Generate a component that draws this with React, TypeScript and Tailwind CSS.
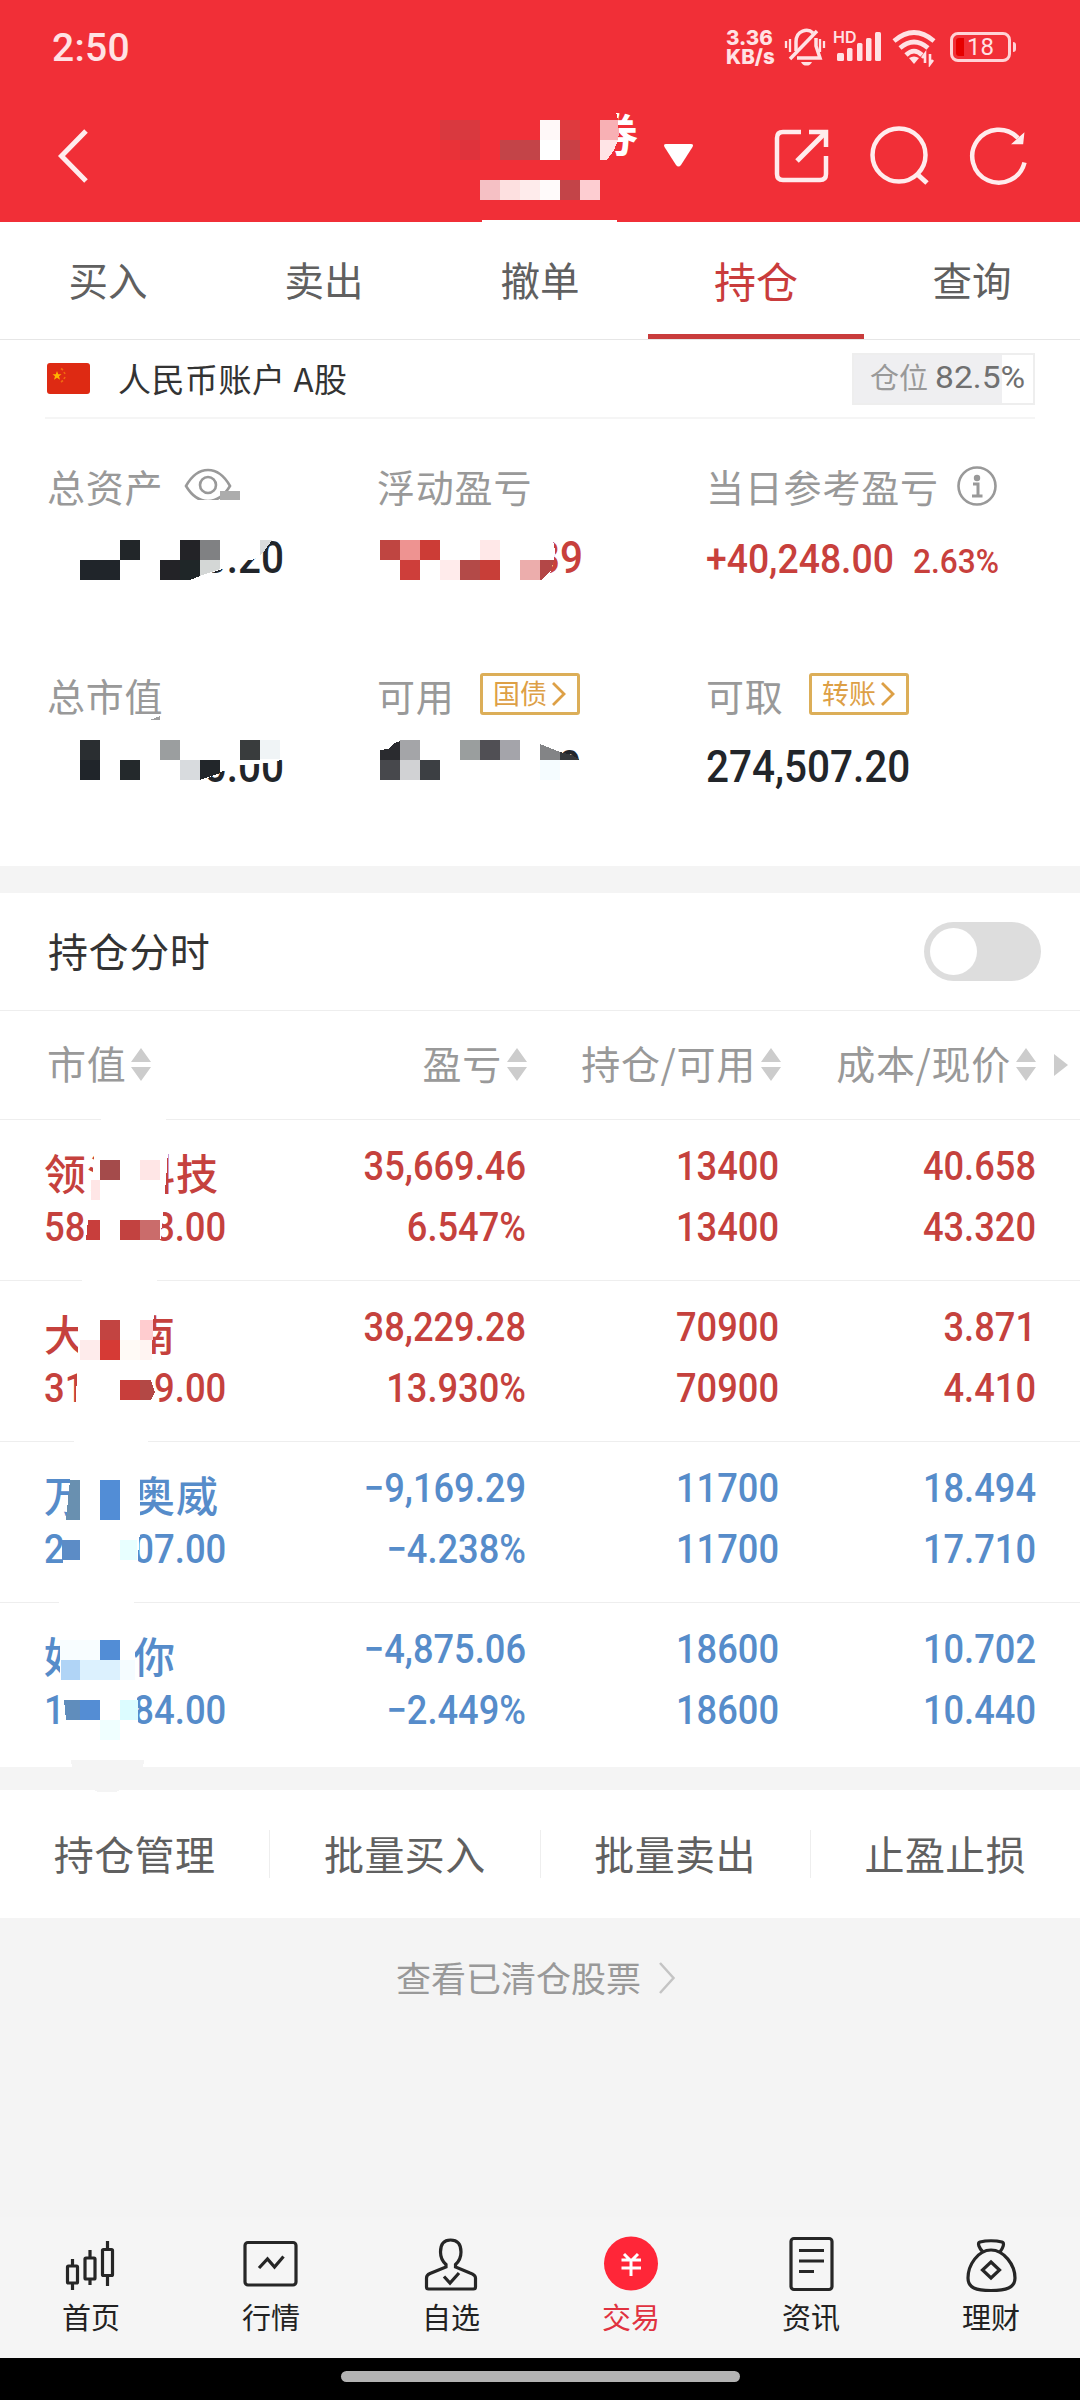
import React from "react";
import clsx from "clsx";

interface Holding {
  name: [string, string];
  nameWidth: string;
  value: [string, string];
  profit: string;
  rate: string;
  total: string;
  usable: string;
  cost: string;
  price: string;
  up: boolean;
}

const holdings: Holding[] = [
  {
    name: ["领氵", "科技"],
    nameWidth: "w-[175px]",
    value: ["58", "8.00"],
    profit: "35,669.46",
    rate: "6.547%",
    total: "13400",
    usable: "13400",
    cost: "40.658",
    price: "43.320",
    up: true,
  },
  {
    name: ["大", "南"],
    nameWidth: "w-[132px]",
    value: ["31", "69.00"],
    profit: "38,229.28",
    rate: "13.930%",
    total: "70900",
    usable: "70900",
    cost: "3.871",
    price: "4.410",
    up: true,
  },
  {
    name: ["万", "奥威"],
    nameWidth: "w-[175px]",
    value: ["2", "07.00"],
    profit: "−9,169.29",
    rate: "−4.238%",
    total: "11700",
    usable: "11700",
    cost: "18.494",
    price: "17.710",
    up: false,
  },
  {
    name: ["好", "你"],
    nameWidth: "w-[132px]",
    value: ["1", "84.00"],
    profit: "−4,875.06",
    rate: "−2.449%",
    total: "18600",
    usable: "18600",
    cost: "10.702",
    price: "10.440",
    up: false,
  },
];

const tabs = ["买入", "卖出", "撤单", "持仓", "查询"];
const actions = ["持仓管理", "批量买入", "批量卖出", "止盈止损"];

// x, y, width, height, color
type Cell = [number, number, number, number, string];

const privacyCells: Cell[] = [
  [440, 120, 40, 20, "#d9393f"],
  [440, 140, 20, 20, "#e93238"],
  [460, 140, 20, 20, "#df333c"],
  [500, 140, 40, 20, "#c34448"],
  [540, 120, 20, 20, "#fff8f8"],
  [540, 140, 20, 20, "#ffffff"],
  [560, 120, 20, 20, "#df3a3e"],
  [560, 140, 20, 20, "#c94045"],
  [480, 180, 20, 20, "#f5c0c4"],
  [500, 180, 20, 20, "#fde0e0"],
  [520, 180, 20, 20, "#feebeb"],
  [540, 180, 20, 20, "#fffafa"],
  [560, 180, 20, 20, "#c34448"],
  [580, 180, 20, 20, "#fdcdd1"],
  [482, 220, 135, 2, "#ffffff"],

  [220, 491, 20, 9, "#acacac"],
  [120, 540, 20, 20, "#222629"],
  [180, 540, 20, 20, "#232327"],
  [200, 540, 20, 20, "#808183"],
  [80, 560, 40, 20, "#20252a"],
  [160, 560, 20, 20, "#232327"],

  [380, 540, 20, 20, "#bf4541"],
  [400, 540, 20, 20, "#ee9391"],
  [420, 540, 20, 20, "#cc3c36"],
  [480, 540, 20, 20, "#ffe8e8"],
  [400, 560, 20, 20, "#ce3e3a"],
  [440, 560, 20, 20, "#ffebeb"],
  [460, 560, 20, 20, "#b34a48"],
  [480, 560, 20, 20, "#c83e38"],
  [520, 560, 20, 20, "#ecadac"],

  [80, 740, 20, 20, "#2a2e31"],
  [160, 740, 20, 20, "#9b9e9f"],
  [240, 740, 20, 20, "#393c3d"],
  [260, 740, 20, 19, "#f0f4f6"],
  [80, 760, 20, 20, "#20252a"],
  [120, 760, 20, 20, "#24292c"],
  [180, 760, 20, 20, "#d8dbde"],

  [400, 740, 20, 20, "#a4a5a8"],
  [460, 740, 20, 20, "#9a9e9e"],
  [480, 740, 20, 20, "#504f54"],
  [500, 740, 20, 20, "#a4a4aa"],
  [380, 760, 20, 20, "#47484c"],
  [400, 760, 20, 20, "#d1d2d4"],
  [420, 760, 20, 20, "#3c3f43"],
  [540, 760, 20, 20, "#f5fcff"],

  [100, 1160, 20, 20, "#a44b4b"],
  [140, 1160, 20, 20, "#ffe6e6"],
  [91, 1180, 9, 20, "#ffe6e6"],
  [120, 1220, 20, 20, "#c24240"],
  [140, 1220, 20, 20, "#ca6c6b"],

  [100, 1320, 20, 20, "#c24441"],
  [140, 1320, 13, 20, "#ffcccf"],
  [80, 1340, 20, 20, "#feebeb"],
  [100, 1340, 20, 20, "#d63a35"],
  [120, 1340, 20, 20, "#fffaf6"],
  [140, 1340, 12, 20, "#fff4f2"],
  [120, 1380, 20, 20, "#c83e3b"],

  [100, 1480, 20, 40, "#528dd6"],
  [120, 1540, 17, 20, "#e8ffff"],

  [60, 1640, 40, 20, "#f8fdff"],
  [100, 1640, 20, 20, "#528dd6"],
  [61, 1660, 19, 20, "#b0d4f6"],
  [80, 1660, 40, 20, "#dcf1fe"],
  [120, 1660, 15, 20, "#f5fcff"],
  [80, 1700, 20, 20, "#548dd4"],
  [120, 1700, 18, 20, "#dcfcff"],
  [100, 1720, 20, 20, "#f0ffff"],
];

// Smudge mask drawn above the sensitive values
function PrivacyMask() {
  return (
    <svg
      className="pointer-events-none absolute inset-0"
      width="1080"
      height="2400"
      viewBox="0 0 1080 2400"
      shapeRendering="crispEdges"
    >
      <path d="M585 105H614L618 120L619 132L616 145L607 160L600 165H585Z" fill="#f12f37" />
      <path d="M180 500H222V510H180Z" fill="#fff" />
      <path d="M40 535H268L272 540L260 556L252 560L240 561L225 568L190 580H40Z" fill="#fff" />
      <path d="M370 535H552L555 550L554 560L550 574L541 582H370Z" fill="#fff" />
      <path d="M40 735H285V759L268 763L240 765L226 770L218 773L200 782H40Z" fill="#fff" />
      <path d="M370 735H558V760H590V790H370Z" fill="#fff" />
      <path d="M102 1117H166V1122H170L166 1180L160 1244H84L91 1190L95 1150Z" fill="#fff" />
      <path d="M82 1280H157V1283L154 1310L151 1362L154 1386L150 1402H76L79 1310Z" fill="#fff" />
      <path d="M74 1440H148V1443L140 1480V1530L137 1570H62L70 1480Z" fill="#fff" />
      <path d="M59 1600H134V1606V1640L136 1680L138 1724H62L60 1670Z" fill="#fff" />
      <path d="M71 1760H144L143 1768H72Z" fill="#f4f4f4" />
      <path d="M92 1789H122L116 1792H98Z" fill="#f4f4f4" />
      {privacyCells.map(([x, y, w, h, fill], i) => (
        <rect key={i} x={x} y={y} width={w} height={h} fill={fill} />
      ))}
      <path d="M600 120H617.5L619 132L618 140H600Z" fill="#f8b0b4" />
      <path d="M600 140H618L614 150L607 160H600Z" fill="#ffe4e6" />
      <path d="M260 540H272L265 550L260 556Z" fill="#dadcdd" />
      <path d="M180 560H200V576L190 580H180Z" fill="#1f2628" />
      <path d="M200 560H220V569L200 576Z" fill="#d4d7d6" />
      <path d="M540 560H554L551 571L541 580H540Z" fill="#b34747" />
      <path d="M150 720L160 716V720Z" fill="#a0a0a0" />
      <path d="M200 760H220V773L200 780Z" fill="#22262a" />
      <path d="M380 760V750L388 749L394 743L400 741V760Z" fill="#2a2b2f" />
      <path d="M540 744L560 752V760H540Z" fill="#838486" />
      <path d="M560 752L572 755L580 760H560Z" fill="#36383b" />
      <path d="M88 1220H100V1240H86Z" fill="#c83e3c" />
      <path d="M140 1380H151L155 1392L151 1400H140Z" fill="#b34845" />
      <path d="M70 1480H80V1520H66Z" fill="#6990b0" />
      <path d="M62 1540H80V1560H62Z" fill="#5c8cc6" />
      <path d="M64 1700H80V1720H66Z" fill="#608dbc" />
    </svg>
  );
}

function StatusBar() {
  return (
    <div className="flex h-[93px] items-center justify-between pl-[52px] pr-[64px] text-[#ffe2e4]">
      <span className="pt-[3px] font-[Roboto] text-[39px] font-medium leading-none tracking-[0.3px]">2:50</span>
      <div className="flex items-center">
        <div className="w-[56px] font-[Inter] text-[20.5px] font-extrabold leading-[19px]">
          3.36
          <br />
          KB/s
        </div>
        <svg width="46" height="40" viewBox="0 0 46 40" fill="none" stroke="currentColor" strokeWidth="3.500">
          <path d="M8 32L35 4" />
          <path d="M14 24V15C14 3 26 1 31 6M34 11V19L38 31H15" />
          <path d="M19 35A6 6 0 0 0 30 35Z" fill="currentColor" stroke="none" />
          <path d="M4 14V21M8 12V25M38 12V25M42 14V21" strokeWidth="2.300" />
        </svg>
        <svg className="ml-[3px]" width="54" height="40" viewBox="0 0 54 40" fill="currentColor">
          <text x="2" y="16" fontFamily="Inter" fontSize="16" fontWeight="600">
            HD
          </text>
          <rect x="6" y="26" width="7" height="8" rx="1.5" />
          <rect x="16" y="21" width="5.500" height="13" rx="1.500" />
          <rect x="26" y="16" width="5.500" height="18" rx="1.500" />
          <rect x="35" y="11" width="5.500" height="23" rx="1.500" />
          <rect x="44" y="5" width="6" height="29" rx="1.500" />
        </svg>
        <svg className="ml-1.5" width="46" height="40" viewBox="0 0 46 40" fill="none" stroke="currentColor" strokeWidth="4.600">
          <path d="M3 14Q23 -3 43 14" />
          <path d="M9 21Q23 9 37 21" />
          <path d="M15 28Q23 20 31 28" />
          <path d="M18 31Q23 28 28 31L23 37Z" fill="currentColor" stroke="none" />
          <path d="M34 36V27L31 31M39 27V37L42 33" strokeWidth="2.600" />
        </svg>
        <div className="ml-[13px] flex items-center gap-0.5">
          <div className="flex h-[30px] w-[61px] items-center rounded-[8px] border-[3px] border-[#ffd3d6] pl-[3px]">
            <div className="h-[18px] w-2 rounded-l-[3px] bg-[#e60000]" />
            <span className="ml-[3px] font-[Roboto] text-[24px] leading-none">18</span>
          </div>
          <div className="h-2.5 w-[3px] rounded-r bg-[#ffd3d6]" />
        </div>
      </div>
    </div>
  );
}

function TitleBar() {
  return (
    <div className="flex h-[129px] items-start text-white">
      <svg className="ml-[56px] mt-[34px]" width="34" height="58" viewBox="0 0 34 58" fill="none" stroke="#ffeced" strokeWidth="5">
        <path d="M30 4L5.500 29L30 54" />
      </svg>
      <div className="ml-[503px] mt-[16px] w-[46px] text-[45px] font-bold leading-[48px]">券</div>
      <svg className="ml-[24px] mt-[50px]" width="31" height="26" viewBox="0 0 31 26" fill="#fff">
        <path d="M3 1H28Q31 1 29.500 4L18 22Q15.500 25 13 22L1.500 4Q0 1 3 1Z" />
      </svg>
      <svg className="ml-[78px] mt-[34px]" width="58" height="58" viewBox="0 0 58 58" fill="none" stroke="#ffeced" strokeWidth="4.500">
        <path d="M29 5H11Q5 5 5 11V47Q5 53 11 53H48Q54 53 54 47V29M37 5H54V20" />
        <path d="M54 5L25 34" strokeWidth="5" />
      </svg>
      <svg className="ml-[38px] mt-[31px]" width="64" height="64" viewBox="0 0 64 64" fill="none" stroke="#ffeced" strokeWidth="4.500">
        <circle cx="31" cy="31" r="26.500" />
        <path d="M49 50L59 59" strokeWidth="5" />
      </svg>
      <svg className="ml-[37px] mt-[32px]" width="62" height="62" viewBox="0 0 62 62" fill="none" stroke="#ffeced" strokeWidth="4.500">
        <path d="M55.500 37.500A26.500 26.500 0 1 1 49 13" />
        <path d="M54.500 9L53.500 18.500H44Z" fill="#ffeced" strokeWidth="1.500" />
      </svg>
    </div>
  );
}

function LinkBadge({ label }: { label: string }) {
  return (
    <div className="ml-[25px] flex h-[42px] w-[100px] items-center justify-center gap-1 rounded-[3px] border-3 border-[#dcae58] pb-[2px] text-[27px] font-normal tracking-normal text-[#dda046]">
      {label}
      <svg className="mt-[2px]" width="15" height="24" viewBox="0 0 15 24" fill="none" stroke="currentColor" strokeWidth="2.800">
        <path d="M2 1L13 12L2 23" />
      </svg>
    </div>
  );
}

function SummaryItem({ label, extra, children }: { label: string; extra?: React.ReactNode; children: React.ReactNode }) {
  return (
    <div>
      <div className="flex h-[46px] items-center text-[38px] tracking-[0.8px] text-[#999]">
        {label}
        {extra}
      </div>
      <div className="mt-[24px] flex h-[52px] items-center font-[Roboto] font-medium">{children}</div>
    </div>
  );
}

const bigNumber = "text-[44px] leading-none text-[#22252a]";

function Summary() {
  return (
    <div className="grid h-[447px] grid-cols-[330px_329px_1fr] grid-rows-[209px_1fr] pl-[47px] pt-[43px]">
      <SummaryItem
        label="总资产"
        extra={
          <svg className="ml-[20px] mt-[2px]" width="50" height="38" viewBox="0 0 50 38" fill="none" stroke="#999" strokeWidth="2.600">
            <path d="M3 19Q12 3 25 3Q38 3 47 19Q38 34 25 34Q12 34 3 19Z" />
            <circle cx="25" cy="18" r="8" />
          </svg>
        }
      >
        <div className={clsx(bigNumber, "w-[237px] origin-right scale-x-[.92] text-right")}>0.20</div>
      </SummaryItem>
      <SummaryItem label="浮动盈亏">
        <div className="w-[206px] origin-right scale-x-[.92] text-right text-[44px] leading-none text-[#c8403c]">39</div>
      </SummaryItem>
      <SummaryItem
        label="当日参考盈亏"
        extra={
          <svg className="ml-[17px] mt-[2px]" width="42" height="42" viewBox="0 0 42 42" fill="none" stroke="#999" strokeWidth="2.600">
            <circle cx="21" cy="21" r="18.500" />
            <circle cx="21" cy="13" r="3.200" fill="#999" stroke="none" />
            <path d="M17 19H22V31M16 31H26.500" strokeWidth="3" />
          </svg>
        }
      >
        <div className="flex items-baseline pt-[2px] text-[#c8403c]">
          <span className="w-[190px] origin-left scale-x-[.91] whitespace-nowrap text-[41px] leading-none">+40,248.00</span>
          <span className="ml-[17px] origin-left scale-x-[.93] text-[34px] leading-none">2.63%</span>
        </div>
      </SummaryItem>
      <SummaryItem label="总市值">
        <div className={clsx(bigNumber, "w-[237px] origin-right scale-x-[.92] text-right")}>0.00</div>
      </SummaryItem>
      <SummaryItem label="可用" extra={<LinkBadge label="国债" />}>
        <div className={clsx(bigNumber, "w-[204px] origin-right scale-x-[.92] text-right")}>0</div>
      </SummaryItem>
      <SummaryItem label="可取" extra={<LinkBadge label="转账" />}>
        <div className={clsx(bigNumber, "origin-left scale-x-[.92]")}>274,507.20</div>
      </SummaryItem>
    </div>
  );
}

function SortHead({ label, className }: { label: string; className: string }) {
  return (
    <div className={clsx("flex items-center gap-[5px] whitespace-nowrap", className)}>
      <span className="pb-[5px]">{label}</span>
      <svg width="20" height="34" viewBox="0 0 20 34" fill="#ccc">
        <path d="M10 0L20 14H0ZM0 19H20L10 33Z" />
      </svg>
    </div>
  );
}

function NumberPair({ top, bottom, className }: { top: string; bottom: string; className: string }) {
  return (
    <div className={clsx("origin-right scale-x-[.895] text-right font-[Roboto] text-[40.5px] font-medium leading-[61px]", className)}>
      <div>{top}</div>
      <div>{bottom}</div>
    </div>
  );
}

function HoldingRow({ item }: { item: Holding }) {
  return (
    <div
      className={clsx(
        "flex h-[161px] border-t border-[#eee] pl-[44px] pt-[16px]",
        item.up ? "text-[#c5413d]" : "text-[#568cca]",
      )}
    >
      <div className="w-[182px]">
        <div
          className={clsx(
            "flex h-[61px] items-center justify-between pt-[9px] text-[42px] font-medium tracking-[1px]",
            item.nameWidth,
          )}
        >
          <span>{item.name[0]}</span>
          <span>{item.name[1]}</span>
        </div>
        <div className="flex justify-between font-[Roboto] text-[40.5px] font-medium leading-[61px]">
          <span className="origin-left scale-x-[.9]">{item.value[0]}</span>
          <span className="origin-right scale-x-[.9]">{item.value[1]}</span>
        </div>
      </div>
      <NumberPair top={item.profit} bottom={item.rate} className="w-[300px]" />
      <NumberPair top={item.total} bottom={item.usable} className="w-[253px]" />
      <NumberPair top={item.cost} bottom={item.price} className="w-[257px]" />
    </div>
  );
}

const navItems: { label: string; active?: boolean; icon: React.ReactNode }[] = [
  {
    label: "首页",
    icon: (
      <>
        <path d="M12.500 25V32M12.500 49V56M30 16V24M30 45V51M47.500 7V16M47.500 42V52" />
        <rect x="7.500" y="32" width="10" height="17" rx="1" />
        <rect x="25" y="24" width="10" height="21" rx="1" />
        <rect x="42.500" y="15.500" width="10" height="26" rx="1" />
      </>
    ),
  },
  {
    label: "行情",
    icon: (
      <>
        <rect x="5" y="8.500" width="51" height="42.500" rx="3" />
        <path d="M19 34L27.500 25L34.500 33L43.500 22.500" />
      </>
    ),
  },
  {
    label: "自选",
    icon: (
      <>
        <path d="M26 33V30.500C22 27 20.500 23 20.500 18C20.500 10 24 6 30.500 6C37 6 41 10 41 18C41 23 39.500 27 35.500 30.500V33L50 39Q55.500 41 55.500 44V53Q55.500 55 53.500 55H8.500Q6.500 55 6.500 53V44Q6.500 41 10 39.500Z" />
        <path d="M24 42.500L30 49L39 39" />
      </>
    ),
  },
  {
    label: "交易",
    active: true,
    icon: (
      <>
        <circle cx="31" cy="29.500" r="27" fill="#ff2638" stroke="none" />
        <path d="M24 20L31 27L38 20M31 27V42M21.500 26H41M21.500 34H41" stroke="#fff" strokeWidth="3" />
      </>
    ),
  },
  {
    label: "资讯",
    icon: (
      <>
        <rect x="11" y="4.500" width="41" height="51" rx="3" />
        <path d="M19 16.500H44M19 27H44M19 37.500H34" />
      </>
    ),
  },
  {
    label: "理财",
    icon: (
      <>
        <path d="M23 18C19 14 17 9 20 8C26 6.500 36 6.500 42 8C45 9 43 14 40 18" />
        <path d="M31 16C18 16 8 31 8 44C8 54 16 56.500 31 56.500C46 56.500 55 54 55 44C55 31 44 16 31 16Z" />
        <path d="M31 28L39.500 36L31 44L22.500 36Z" />
      </>
    ),
  },
];

export default function App() {
  return (
    <div className="relative flex h-[2400px] w-[1080px] flex-col overflow-hidden bg-[#f4f4f4] font-['Noto_Sans_CJK_SC',sans-serif]">
      <header className="bg-[#f12f37]">
        <StatusBar />
        <TitleBar />
      </header>

      <nav className="flex h-[118px] border-b border-[#e6e6e6] bg-white">
        {tabs.map((tab) => (
          <div
            key={tab}
            className={clsx(
              "flex flex-1 items-center justify-center",
              tab === "持仓"
                ? "border-b-[5px] border-[#c93c3c] pt-[2px] text-[42px] text-[#c93c3c]"
                : "pb-[3px] text-[39.5px] text-[#606060]",
            )}
          >
            {tab}
          </div>
        ))}
      </nav>

      <section className="bg-white">
        <div className="mx-[45px] flex h-[79px] items-center border-b-2 border-[#f5f5f5] pl-[2px]">
          <svg width="43" height="31" viewBox="0 0 43 31">
            <rect width="43" height="31" rx="3" fill="#de2a13" />
            <path d="M10 8L11.200 11.200H14.500L12 13.300L13 16.700L10 14.700L7 16.700L8 13.300L5.500 11.200H8.800Z" fill="#ffb400" />
            <path d="M14 5.500L16 7M17 9L18 11M18 14L17 16M16 17.500L14 19" stroke="#f06a10" strokeWidth="1.600" />
          </svg>
          <span className="ml-[28px] flex-1 text-[33px] tracking-[0.5px] text-[#333]">人民币账户 A股</span>
          <div className="flex h-[52px] w-[183px] items-center whitespace-nowrap border-2 border-[#eee] bg-[linear-gradient(90deg,#efeff1_148px,#fff_148px)] pb-[3px] pl-[16px] text-[29px] text-[#999]">
            仓位
            <span className="ml-[7px] origin-left scale-x-[1.05] font-[Roboto] text-[32px] text-[#707070]">82.5%</span>
          </div>
        </div>
        <Summary />
      </section>

      <section className="mt-[27px] bg-white">
        <div className="flex h-[117px] items-center justify-between pl-[48px] pr-[39px]">
          <span className="pb-[3px] text-[40px] tracking-[0.6px] text-[#333]">持仓分时</span>
          <div className="flex h-[59px] w-[117px] items-center rounded-full bg-[#ddd] pl-[6px]">
            <div className="size-[47px] rounded-full bg-white" />
          </div>
        </div>
        <div className="flex h-[109px] items-center border-t border-[#eee] pl-[47px] text-[39px] tracking-[0.7px] text-[#999]">
          <SortHead label="市值" className="w-[180px]" />
          <SortHead label="盈亏" className="w-[300px] justify-end" />
          <SortHead label="持仓/可用" className="w-[254px] justify-end" />
          <SortHead label="成本/现价" className="w-[255px] justify-end" />
          <svg className="ml-[18px]" width="14" height="22" viewBox="0 0 14 22" fill="#ccc">
            <path d="M0 0L14 11L0 22Z" />
          </svg>
        </div>
        {holdings.map((item) => (
          <HoldingRow key={item.name[0]} item={item} />
        ))}
        <div className="h-1" />
      </section>

      <section className="mt-[23px] flex h-[128px] items-center bg-white">
        {actions.map((action, i) => (
          <div
            key={action}
            className={clsx(
              "flex h-[48px] flex-1 items-center justify-center pb-[3px] text-[40px] tracking-[0.4px] text-[#606060]",
              i > 0 && "border-l border-[#eee]",
            )}
          >
            {action}
          </div>
        ))}
      </section>

      <div className="flex h-[120px] items-center justify-center gap-[17px] pr-2 text-[35px] text-[#999]">
        <span className="pb-[2px]">查看已清仓股票</span>
        <svg width="18" height="32" viewBox="0 0 18 32" fill="none" stroke="#c4c4c4" strokeWidth="2.500">
          <path d="M2 1L15.500 16L2 31" />
        </svg>
      </div>

      <nav className="mt-auto flex h-[141px] bg-[#f5f5f5] pt-[17px] pl-[1px]">
        {navItems.map((item) => (
          <div key={item.label} className="flex w-[180px] shrink-0 flex-col items-center">
            <svg width="62" height="60" viewBox="0 0 62 60" fill="none" stroke="#262626" strokeWidth="3.200">
              {item.icon}
            </svg>
            <span className={clsx("mt-[2px] text-[29px] leading-[40px]", item.active ? "text-[#e03240]" : "text-[#222]")}>
              {item.label}
            </span>
          </div>
        ))}
      </nav>
      <div className="flex h-[42px] justify-center bg-black pt-[13px]">
        <div className="h-[11px] w-[399px] rounded-full bg-[#b3b3b3]" />
      </div>

      <PrivacyMask />
    </div>
  );
}
